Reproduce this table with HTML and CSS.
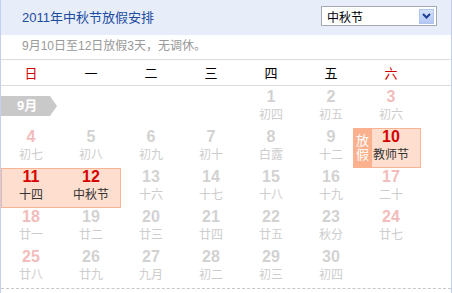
FILE: index.html
```html
<!DOCTYPE html>
<html lang="zh-CN">
<head>
<meta charset="utf-8">
<title>2011年中秋节放假安排</title>
<link rel="stylesheet" href="styles.css">
</head>
<body>
<div class="cal">
  <div class="head">
    <h1 class="title">2011年中秋节放假安排</h1>
    <div class="select">
      <span class="select-text">中秋节</span>
      <span class="select-btn"><svg width="9" height="6" viewBox="0 0 9 6"><path d="M1 1 L4.5 4.5 L8 1" fill="none" stroke="#1f3f96" stroke-width="2"/></svg></span>
    </div>
  </div>
  <div class="sub">9月10日至12日放假3天，无调休。</div>
  <div class="week">
    <span class="wk red">日</span><span class="wk">一</span><span class="wk">二</span><span class="wk">三</span><span class="wk">四</span><span class="wk">五</span><span class="wk red">六</span>
  </div>
  <div class="body">
    <div class="month-tag">9月</div>
    <div class="grid">
      <div class="cell"></div><div class="cell"></div><div class="cell"></div><div class="cell"></div>
      <div class="cell"><b class="num">1</b><span class="lunar">初四</span></div>
      <div class="cell"><b class="num">2</b><span class="lunar">初五</span></div>
      <div class="cell we"><b class="num">3</b><span class="lunar">初六</span></div>

      <div class="cell we"><b class="num">4</b><span class="lunar">初七</span></div>
      <div class="cell"><b class="num">5</b><span class="lunar">初八</span></div>
      <div class="cell"><b class="num">6</b><span class="lunar">初九</span></div>
      <div class="cell"><b class="num">7</b><span class="lunar">初十</span></div>
      <div class="cell"><b class="num">8</b><span class="lunar">白露</span></div>
      <div class="cell"><b class="num">9</b><span class="lunar">十二</span></div>
      <div class="cell hol start end"><span class="badge">放<br>假</span><b class="num">10</b><span class="lunar">教师节</span></div>

      <div class="cell hol start"><b class="num">11</b><span class="lunar">十四</span></div>
      <div class="cell hol end"><b class="num">12</b><span class="lunar">中秋节</span></div>
      <div class="cell"><b class="num">13</b><span class="lunar">十六</span></div>
      <div class="cell"><b class="num">14</b><span class="lunar">十七</span></div>
      <div class="cell"><b class="num">15</b><span class="lunar">十八</span></div>
      <div class="cell"><b class="num">16</b><span class="lunar">十九</span></div>
      <div class="cell we"><b class="num">17</b><span class="lunar">二十</span></div>

      <div class="cell we"><b class="num">18</b><span class="lunar">廿一</span></div>
      <div class="cell"><b class="num">19</b><span class="lunar">廿二</span></div>
      <div class="cell"><b class="num">20</b><span class="lunar">廿三</span></div>
      <div class="cell"><b class="num">21</b><span class="lunar">廿四</span></div>
      <div class="cell"><b class="num">22</b><span class="lunar">廿五</span></div>
      <div class="cell"><b class="num">23</b><span class="lunar">秋分</span></div>
      <div class="cell we"><b class="num">24</b><span class="lunar">廿七</span></div>

      <div class="cell we"><b class="num">25</b><span class="lunar">廿八</span></div>
      <div class="cell"><b class="num">26</b><span class="lunar">廿九</span></div>
      <div class="cell"><b class="num">27</b><span class="lunar">九月</span></div>
      <div class="cell"><b class="num">28</b><span class="lunar">初二</span></div>
      <div class="cell"><b class="num">29</b><span class="lunar">初三</span></div>
      <div class="cell"><b class="num">30</b><span class="lunar">初四</span></div>
      <div class="cell"></div>
    </div>
  </div>
</div>
</body>
</html>
```
FILE: styles.css
```css
* { box-sizing: border-box; }
html, body { margin: 0; padding: 0; background: #fff; }
body {
  font-family: "Liberation Sans", "Noto Sans CJK SC", sans-serif;
  width: 452px;
  height: 293px;
  overflow: hidden;
}
.cal {
  width: 452px;
  height: 293px;
  border-left: 1px solid #c3d0f2;
  border-right: 1px solid #c3d0f2;
}
.head {
  height: 35px;
  background: #e7edf9;
  display: flex;
  align-items: flex-start;
  padding-left: 21px;
  padding-right: 14px;
}
.title {
  margin: 0;
  font-size: 13px;
  font-weight: normal;
  color: #1c4c9f;
  line-height: 35px;
}
.select {
  margin-left: auto;
  margin-top: 6px;
  width: 116px;
  height: 20px;
  border: 1px solid #a5a9b3;
  background: #fff;
  display: flex;
  align-items: center;
  padding-left: 5px;
  padding-right: 2px;
}
.select-text {
  font-size: 12px;
  color: #000;
  flex: 1;
}
.select-btn {
  width: 15px;
  height: 15px;
  background: linear-gradient(#d6e2fb, #b3c8f5);
  border: 1px solid #b0c4f0;
  display: flex;
  align-items: center;
  justify-content: center;
}
.sub {
  height: 25px;
  border-bottom: 1px solid #dcdcdc;
  padding-left: 21px;
  font-size: 12px;
  color: #999;
  line-height: 22px;
}
.week {
  height: 26px;
  border-bottom: 1px solid #dcdcdc;
  display: grid;
  grid-template-columns: repeat(7, 60px);
  align-items: center;
}
.wk {
  text-align: center;
  font-size: 13px;
  color: #000;
}
.wk.red { color: #d00000; }
.body {
  position: relative;
  padding-top: 2px;
  border-bottom: 1px dashed #c8c8c8;
}
.month-tag {
  position: absolute;
  left: 0;
  top: 10px;
  width: 56px;
  height: 20px;
  background: #c9c9c9;
  clip-path: polygon(0 0, 49px 0, 56px 10px, 49px 20px, 0 20px);
  color: #fff;
  font-weight: bold;
  font-size: 13px;
  line-height: 20px;
  padding-left: 16px;
}
.grid {
  display: grid;
  grid-template-columns: repeat(7, 60px);
  grid-auto-rows: 40px;
}
.cell {
  position: relative;
  display: flex;
  flex-direction: column;
  align-items: center;
}
.num {
  font-size: 16px;
  font-weight: bold;
  line-height: 18px;
  color: #d2d2d2;
  font-family: "Liberation Sans", sans-serif;
}
.lunar {
  font-size: 12px;
  line-height: 18px;
  color: #cdcdcd;
}
.we .num { color: #f3bcbc; }
.hol { background: #fedfcf; }
.hol .num { color: #d60000; }
.hol .lunar { color: #333; }
.hol.start { box-shadow: inset 0 1px 0 #f9b493, inset 0 -1px 0 #f9b493, inset 1px 0 0 #f9b493; }
.hol.end { box-shadow: inset 0 1px 0 #f9b493, inset 0 -1px 0 #f9b493, inset -1px 0 0 #f9b493; }
.hol.start.end { box-shadow: inset 0 1px 0 #f9b493, inset 0 -1px 0 #f9b493, inset -1px 0 0 #f9b493; }
.hol.start.end::before {
  content: "";
  position: absolute;
  left: -8px;
  top: 0;
  bottom: 0;
  width: 70px;
  border: 1px solid #f9b493;
  background: #fedfcf;
  z-index: -1;
}
.badge {
  position: absolute;
  left: -8px;
  top: 0;
  width: 19px;
  height: 40px;
  background: #fbb18d;
  color: #fff;
  font-size: 13px;
  line-height: 14px;
  text-align: center;
  padding-top: 6px;
}
```
